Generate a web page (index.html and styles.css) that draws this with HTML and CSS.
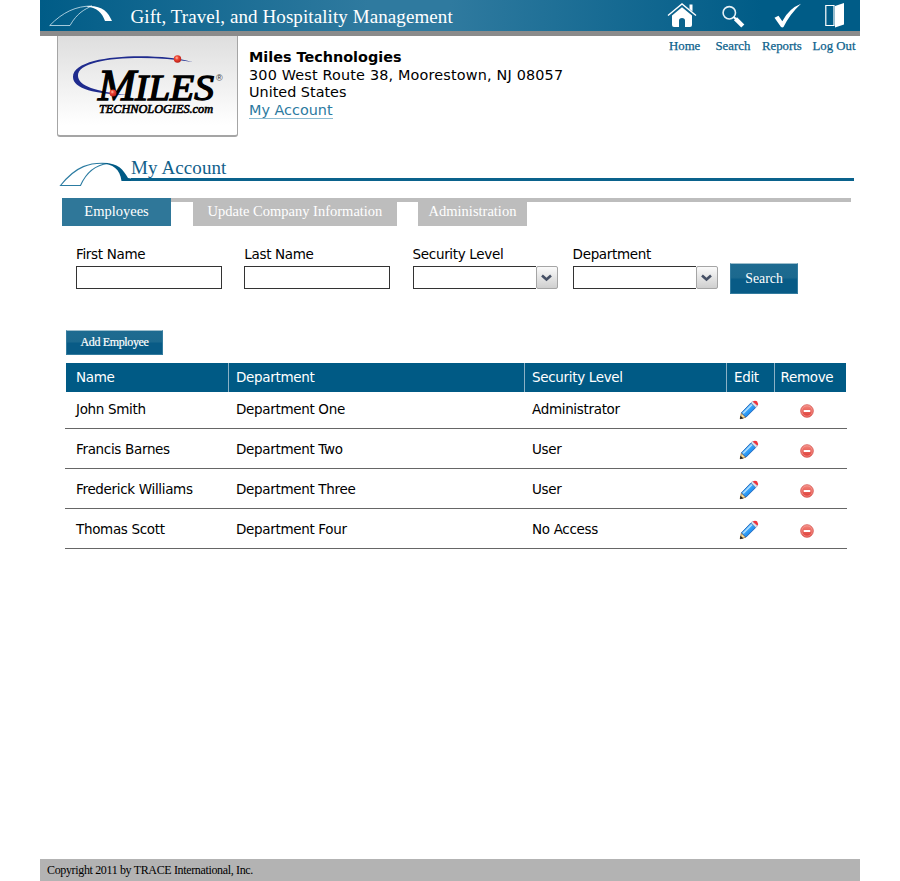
FILE: index.html
```html
<!DOCTYPE html>
<html lang="en">
<head>
<meta charset="utf-8">
<title>Gift, Travel, and Hospitality Management</title>
<link rel="stylesheet" href="styles.css">
</head>
<body>
<svg width="0" height="0" class="defs" aria-hidden="true">
  <defs>
    <linearGradient id="blue" x1="0" y1="0" x2="1" y2="1"><stop offset=".25" stop-color="#7cc8ff"/><stop offset=".55" stop-color="#2b9af6"/><stop offset="1" stop-color="#0a62cc"/></linearGradient>
    <linearGradient id="red" x1="0" y1="0" x2="0" y2="1"><stop offset="0" stop-color="#f58a80"/><stop offset="1" stop-color="#dc3a34"/></linearGradient>
    <radialGradient id="ball" cx=".4" cy=".35" r=".65"><stop offset="0" stop-color="#ffc0a8"/><stop offset=".4" stop-color="#ee4433"/><stop offset="1" stop-color="#b82018"/></radialGradient>
    <symbol id="pencil" viewBox="0 0 20 20">
      <path d="M1.2 18.8 2.4 13 6.8 17.2z" fill="#f6dc96" stroke="#9b7440" stroke-width=".8"/>
      <path d="M.9 19.1 1.5 15.8 4.6 18.4z" fill="#222"/>
      <path d="M2.4 12.8 12 2.8 16.8 7.4 7 17.2z" fill="url(#blue)" stroke="#1559b0" stroke-width=".8"/>
      <path d="M4.2 13.4 13 4.6" stroke="#b9e4ff" stroke-width="1.3"/>
      <path d="M12 2.8 13.5 1.4 18.4 5.8 16.8 7.4z" fill="#dfe4ee" stroke="#6f86a8" stroke-width=".5"/>
      <path d="M13.6 1.4Q16 0 18 1.2 19.8 3.5 18.5 5.8z" fill="#f0333d"/>
    </symbol>
    <symbol id="remove" viewBox="0 0 14 14">
      <circle cx="7" cy="7" r="6.3" fill="url(#red)" stroke="#d9635d" stroke-width=".9"/>
      <circle cx="7" cy="7" r="5.2" fill="none" stroke="#f7a49d" stroke-width=".6"/>
      <rect x="3.7" y="5.9" width="6.6" height="2.2" rx=".6" fill="#fff"/>
    </symbol>
  </defs>
</svg>
<div class="page">
  <header class="bar">
    <svg class="arch" width="64" height="22" viewBox="0 0 64 22">
      <path d="M.7 20.5C14 7 27 1 43 1 36 4 28 8 21 20.5Z" fill="none" stroke="#cfe6f0" stroke-width=".8"/>
      <path d="M37 1.2C53 0 59 7 63 16H56C53 7 48 3 37 1.2Z" fill="#fff"/>
    </svg>
    <h1 class="title">Gift, Travel, and Hospitality Management</h1>
    <nav class="icons">
      <svg width="200" height="31" viewBox="0 0 200 31">
        <path d="M8 15.5 22 4 36 15.5" fill="none" stroke="#fff" stroke-width="1.4"/>
        <path d="M29.5 4.5H32.5V11.5L29.5 9ZM12 15.5 22 7.2 32 15.5V25Q32 27 30 27H25V20.5Q25 18 22 18T19 20.5V27H14Q12 27 12 25Z" fill="#fff"/>
        <circle cx="69.3" cy="12.8" r="6.2" fill="none" stroke="#e6f1f6" stroke-width="1.6"/>
        <path d="M73.6 17 76.5 19.5" stroke="#fff" stroke-width="2.2"/>
        <path d="M75.5 18.8 82.8 26" stroke="#fff" stroke-width="4.4"/>
        <path d="M114.5 17.8 118.5 15.8 122.3 21.2Q129 8.5 141 3.8 130 14 123.5 27Q122.5 27.8 121 27Z" fill="#fff"/>
        <path d="M165.8 5.5H174V25.5H165.8Z" fill="none" stroke="#fff" stroke-width="1.2"/>
        <path d="M175 6 184 3V24.5L175 27.5Z" fill="#fff"/>
      </svg>
    </nav>
  </header>
  <section class="company">
    <div class="logo">
      <svg width="179" height="99" viewBox="0 0 179 99">
        <path d="M134.5 26C102 16.5 15 17 15 41 15 53 38 58 69 59 38 55.5 20.5 50 20 40 19 21 87 18.5 134.5 26Z" fill="#1f2b8e"/>
        <text class="miles" y="63.5"><tspan class="big" x="40" textLength="38" lengthAdjust="spacingAndGlyphs">M</tspan><tspan x="77" textLength="79" lengthAdjust="spacingAndGlyphs">ILES</tspan></text>
        <text class="tech" x="41" y="77" textLength="114" lengthAdjust="spacingAndGlyphs">TECHNOLOGIES.com</text>
        <text class="reg" x="158" y="45" textLength="7">®</text>
        <circle cx="119.5" cy="23" r="3.7" fill="url(#ball)"/>
        <circle cx="55" cy="57" r="3.5" fill="url(#ball)"/>
      </svg>
    </div>
    <address class="address">
      <b class="name">Miles Technologies</b><br><span class="street">300 West Route 38, Moorestown, NJ 08057</span><br><span>United States</span><br><a class="account">My Account</a>
    </address>
    <nav class="links"><a>Home</a><a>Search</a><a>Reports</a><a>Log Out</a></nav>
  </section>
  <div class="heading">
    <svg class="swoosh" width="72" height="26" viewBox="0 0 72 26">
      <path d="M1.5 24.5C17 5 31 1 49 2.5 36 4 27 12 21.5 24.5Z" fill="none" stroke="#2c7ca2" stroke-width="1.1"/>
      <path d="M42 2.1C58 1 64 8 69 17L72 17.5V20H62.5C61 8 54 3.5 42 2.1Z" fill="#005a85"/>
    </svg>
    <h2>My Account</h2>
  </div>
  <nav class="tabs">
    <a class="tab active">Employees</a><a class="tab update">Update Company Information</a><a class="tab admin">Administration</a>
  </nav>
  <form class="filters">
    <label class="field"><span>First Name</span><input type="text"></label>
    <label class="field"><span>Last Name</span><input type="text"></label>
    <label class="field drop"><span>Security Level</span><span class="combo"><i></i><b><svg width="11" height="8" viewBox="0 0 11 8"><path d="M1 1.5 5.5 5.5 10 1.5" fill="none" stroke="#465065" stroke-width="2.6"/></svg></b></span></label>
    <label class="field drop"><span>Department</span><span class="combo"><i></i><b><svg width="11" height="8" viewBox="0 0 11 8"><path d="M1 1.5 5.5 5.5 10 1.5" fill="none" stroke="#465065" stroke-width="2.6"/></svg></b></span></label>
    <button type="button" class="btn search">Search</button>
  </form>
  <button type="button" class="btn add">Add Employee</button>
  <div class="table">
    <div class="row head"><span>Name</span><span>Department</span><span>Security Level</span><span>Edit</span><span>Remove</span></div>
    <div class="row"><span>John Smith</span><span>Department One</span><span>Administrator</span><svg class="pencil"><use href="#pencil"/></svg><svg class="remove"><use href="#remove"/></svg></div>
    <div class="row"><span>Francis Barnes</span><span>Department Two</span><span>User</span><svg class="pencil"><use href="#pencil"/></svg><svg class="remove"><use href="#remove"/></svg></div>
    <div class="row"><span>Frederick Williams</span><span>Department Three</span><span>User</span><svg class="pencil"><use href="#pencil"/></svg><svg class="remove"><use href="#remove"/></svg></div>
    <div class="row"><span>Thomas Scott</span><span>Department Four</span><span>No Access</span><svg class="pencil"><use href="#pencil"/></svg><svg class="remove"><use href="#remove"/></svg></div>
  </div>
  <footer>Copyright 2011 by TRACE International, Inc.</footer>
</div>
</body>
</html>
```
FILE: styles.css
```css
* { box-sizing: border-box; }
body { margin: 0; background: #fff; color: #000; font: 13.5px/20px "DejaVu Sans", sans-serif; letter-spacing: -.33px; }
.defs { display: block; height: 0; }
.page { width: 820px; height: 881px; margin: 0 auto; display: flex; flex-direction: column; }
.bar { height: 36px; flex: none; display: flex; border-bottom: 5px solid #8b8b8b; background: linear-gradient(90deg, #005c87 0, #2f7a9f 40%, #2f7a9f 50%, #005c87 88%); }
.arch { margin: 5px 0 0 9px; }
.title { margin: 0 0 0 17.5px; width: 380.5px; font: 19px/33px "Liberation Serif", serif; letter-spacing: .09px; color: #fff; white-space: nowrap; }
.icons { margin-left: 149px; height: 31px; }
.icons svg { display: block; }
.company { height: 121px; flex: none; display: flex; }
.logo { flex: none; width: 181px; height: 101px; margin-left: 17px; border: solid #a5a5a5; border-radius: 0 0 3px 3px; border-width: 0 1px 2px 1px; background: linear-gradient(#dedede, #fff 90%); letter-spacing: 0; }
.miles { font: italic 35px "Liberation Serif", serif; stroke: #000; stroke-width: 1.3px; }
.miles .big { font-size: 45px; }
.tech { font: italic 12.5px "Liberation Serif", serif; stroke: #000; stroke-width: .65px; }
.reg { font: 9px "Liberation Sans", sans-serif; fill: #333; }
.address { flex: none; width: 375px; margin: 13px 0 0 11px; font: 14.4px/17.7px "DejaVu Sans", sans-serif; letter-spacing: 0; white-space: nowrap; }
.name { font-size: 14.4px; }
.street { letter-spacing: .17px; }
.account { color: #2c7a9f; border-bottom: 1px solid #8dbbd0; display: inline-block; line-height: 16px; }
.links { display: flex; margin: 1px 0 0 45px; font: 12.8px/18px "Liberation Serif", serif; letter-spacing: 0; color: #0c628c; white-space: nowrap; -webkit-text-stroke: .25px #0c628c; }
.links a { flex: none; width: 46.5px; }
.links a:nth-child(3) { width: 50.5px; }
.links a:last-child { width: auto; }
.heading { height: 41px; flex: none; display: flex; align-items: flex-start; margin-left: 19px; }
.swoosh { margin-top: 4px; flex: none; }
.heading h2 { flex: none; width: 723px; height: 24px; margin: 0; border-bottom: 3px solid #0a628c; font: 19px/22px "Liberation Serif", serif; letter-spacing: .1px; color: #10608a; }
.tabs { width: 789px; height: 28px; flex: none; margin-left: 22px; display: flex; border-top: 4px solid #bdbdbd; font: 14.5px/19px "Liberation Serif", serif; letter-spacing: 0; color: #fff; }
.tab { height: 24px; background: #bdbdbd; text-align: center; white-space: nowrap; }
.tab.active { width: 109px; height: 28px; margin-top: -4px; padding-top: 4px; background: #2f7799; }
.update { width: 204px; margin-left: 22px; }
.admin { width: 109px; margin-left: 21px; }
.filters { height: 104px; flex: none; display: flex; padding: 18px 0 0 36px; }
.field { width: 168.3px; }
.field > span { display: block; }
.field input { display: block; width: 146px; height: 23px; margin-top: 2px; border: 1px solid #333; background: #fff; }
.field.drop { width: 160px; }
.field .combo { width: 145px; height: 23px; margin-top: 2px; display: flex; }
.combo i { width: 123px; border: 1px solid #333; border-right: 0; }
.combo b { width: 22px; border: 1px solid #a5a5a5; border-radius: 2px; display: flex; align-items: center; justify-content: center; background: linear-gradient(#fafafa, #cfcfcf); }
.btn { padding: 0; border: 1px solid #337b9e; border-top-color: #9fbfcd; color: #fff; background: linear-gradient(#1e6b91 0, #1c698e 46%, #085b86 54%, #085b86 100%); font: 13.8px "Liberation Serif", serif; }
.search { width: 68px; height: 31px; margin: 19px 0 0 -2.5px; }
.add { flex: none; width: 97px; height: 25px; margin-left: 26px; font-size: 12px; letter-spacing: -.35px; -webkit-text-stroke: .2px #fff; }
.table { margin: 8px 0 0 25px; width: 782px; }
.row { display: grid; grid-template-columns: 163px 296px 202px 48px 73px; height: 40px; border-bottom: 1px solid #666; align-items: start; }
.row > span { padding: 10px 0 0 11px; white-space: nowrap; }
.row > span + span { padding-left: 8px; }
.row.head { height: 29px; margin: 0 1px; grid-template-columns: 162px 296px 202px 48px 72px; border: 0; background: #005a85; color: #fff; align-items: stretch; }
.row.head > span { padding: 4px 0 0 10px; }
.row.head > span + span { padding-left: 7px; border-left: 1px solid #8bb1c5; }
.row.head > span:last-child { padding-left: 5.5px; }
.head + .row { height: 37px; }
.head + .row > span { padding-top: 7px; }
.pencil { width: 20px; height: 20px; margin: 11px 0 0 12.5px; }
.remove { width: 14px; height: 14px; margin: 15px 0 0 26px; }
.head + .row .pencil { margin-top: 8px; }
.head + .row .remove { margin-top: 12px; }
footer { height: 22px; margin-top: auto; padding-left: 7px; background: #b3b3b3; font: 12px/22px "Liberation Serif", serif; letter-spacing: -.35px; }
```
